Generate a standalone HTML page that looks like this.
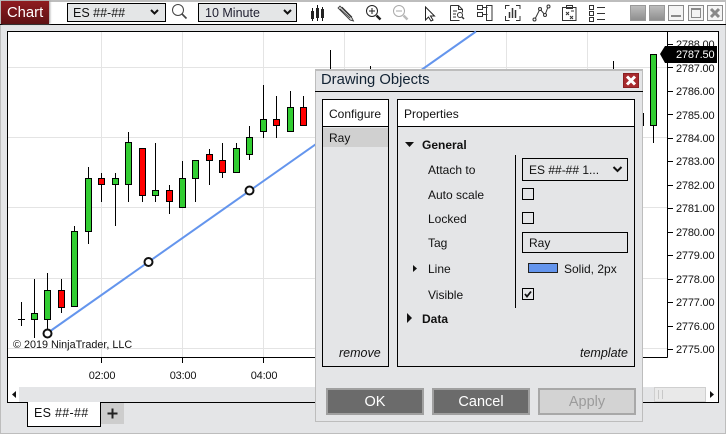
<!DOCTYPE html>
<html><head><meta charset="utf-8"><style>
html,body{margin:0;padding:0}
body{width:726px;height:434px;position:relative;overflow:hidden;background:#e4e5e7;font-family:"Liberation Sans",sans-serif;color:#111}
div{position:absolute;box-sizing:border-box}
.t{white-space:nowrap;line-height:16px;height:16px;font-size:12px}
.ax{font-size:11px;letter-spacing:-.2px;color:#111;margin-top:1px}
.sel{border:1px solid #000;background:#e4e6e7}
.btn{background:#6b6b6b;border:2px solid #a0a0a0;color:#fff;text-align:center;font-size:14.5px;line-height:25px}
.cb{width:12px;height:12px;border:1px solid #000;background:#e4e5e7;left:522px}
</style></head><body>
<div style="left:0;top:0;width:726px;height:434px;border:1px solid #bdbdbd;border-top:2px solid #bdbdbd"></div>
<div style="left:1px;top:2px;width:724px;height:22px;background:#fff"></div>
<div style="left:0;top:24px;width:726px;height:1px;background:#000"></div>
<div style="left:1px;top:1px;width:48px;height:23px;background:linear-gradient(#8f1c20,#5e1114);box-shadow:1px 0 2px #999"></div>
<div class="t" style="left:7px;top:4px;color:#fff;font-size:14.8px;line-height:18px;height:18px">Chart</div>
<div class="sel" style="left:67px;top:3px;width:99px;height:19px"></div>
<div class="t" style="left:73px;top:5px;font-size:12.5px">ES ##-##</div>
<div class="sel" style="left:198px;top:3px;width:99px;height:19px"></div>
<div class="t" style="left:205px;top:5px;font-size:12.5px;color:#223">10 Minute</div>

<svg style="position:absolute;left:0;top:0" width="726" height="25" viewBox="0 0 726 25" fill="none" stroke="#111">
<path d="M151 10l3.500 3.500 3.500-3.500M284 10l3.500 3.500 3.500-3.500" stroke-width="2"/>
<circle cx="178" cy="10" r="5.500" stroke="#444"/><path d="M182 14l4.500 4.500" stroke="#444" stroke-width="1.600"/>
<g stroke-width="1"><path d="M312.500 8v13M317.500 5v16M322.500 7v14"/></g>
<g fill="#222" stroke="none"><rect x="311" y="11" width="3" height="8"/><rect x="316" y="8" width="3" height="10"/><rect x="321" y="9" width="3" height="9"/></g>
<path d="M340 6l12 12 1.500 3-3.500-1-12-12zM340 9l10 9M342 7l10 10" stroke="#333" fill="#ccc" stroke-width=".8"/>
<circle cx="372" cy="11" r="5.500" stroke="#222"/><path d="M369 11h6M372 8v6" stroke="#222"/><path d="M376.500 15.500l4 4" stroke="#222" stroke-width="2.500"/>
<circle cx="399" cy="11" r="5.500" stroke="#aaa"/><path d="M396 11h6" stroke="#aaa"/><path d="M403.500 15.500l4 4" stroke="#bbb" stroke-width="2.500"/>
<path d="M425.500 7v13l3-3 2.500 4 2-1-2.500-4h4z" stroke="#222" fill="#fff"/>
<path d="M450.500 5.500h8l4 4v3M450.500 5.500v15h9M458.500 5.500v4h4M453 11h4M453 14h3M453 17h3" stroke="#333"/><circle cx="460" cy="15" r="2.500" stroke="#333"/><path d="M462 17l2 2" stroke="#333" stroke-width="1.500"/>
<path d="M477.500 5.500h5v4h-5zM477.500 12.500h5v4h-5zM482.500 7.500h5M482.500 14.500h5M486.500 5.500h5.500v15h-5.500z" stroke="#333"/>
<path d="M505.500 9V5.500h4M516 5.500h4V9M505.500 16v4.500h4M516 20.500h4V16" stroke="#333"/>
<path d="M509.500 12v6M512.500 8v10M515.500 10v8" stroke="#333" stroke-width="1.500"/>
<path d="M535 19l5-10 5 6 3-8" stroke="#333"/><g fill="#fff" stroke="#333"><circle cx="534.500" cy="19.500" r="1.500"/><circle cx="540" cy="9" r="1.500"/><circle cx="545" cy="15" r="1.500"/><circle cx="548.500" cy="6.500" r="1.500"/></g>
<path d="M562.500 7.500h13.500v13h-13.500zM566.500 5.500h6v3h-6zM566 12l3 3M569 12l-3 3M570 16l3 3M573 16l-3 3M571 11h3" stroke="#333"/>
<path d="M589.500 5.500h4v4h-4zM589.500 11.500h4v4h-4zM589.500 17.500h4v4h-4zM597 7.500h8M597 13.500h8M597 19.500h8" stroke="#333"/>
</svg>
<div style="left:630px;top:5px;width:16px;height:16px;background:linear-gradient(#bdbdbd,#8f8f8f);border:1px solid #999"></div>
<div style="left:649px;top:5px;width:16px;height:16px;background:linear-gradient(#bdbdbd,#8f8f8f);border:1px solid #999"></div>
<div style="left:668px;top:5px;width:16px;height:16px;border:1px solid #8a8a8a;background:#f4f4f4"><div style="left:2px;top:9px;width:10px;height:2px;background:#8a8a8a"></div></div>
<div style="left:688px;top:5px;width:16px;height:16px;border:1px solid #8a8a8a;background:#f4f4f4"><div style="left:2px;top:2px;width:10px;height:10px;border:1px solid #8a8a8a;border-top:2px solid #8a8a8a"></div></div>
<div style="left:707px;top:5px;width:16px;height:16px;border:1px solid #8a8a8a;background:#f4f4f4"><svg style="position:absolute;left:0;top:0" width="14" height="14"><path d="M3 3l8 8M11 3l-8 8" stroke="#888" stroke-width="3"/></svg></div>

<div style="left:7px;top:31px;width:712px;height:372px;border:1px solid #000;background:#fff"></div>
<svg style="position:absolute;left:0;top:0" width="726" height="434" viewBox="0 0 726 434" fill="none">
<g stroke="#e4e4e4" shape-rendering="crispEdges">
<path d="M101.500 32V357M182.500 32V357M263.500 32V357M344.500 32V357M425.500 32V357M506.500 32V357M587.500 32V357"/>
<path d="M8 67.500H667M8 137.500H667M8 207.500H667M8 278.500H667M8 348.500H667"/>
</g>
<path d="M47.500 333L476 31.500" stroke="#6495ed" stroke-width="2"/>
<g stroke="#000" shape-rendering="crispEdges">
<path d="M21.500 302V326M18 319.500H25M34.500 279V338M47.500 273V333M61.500 279V313M74.500 226V232M88.500 167V244M101.500 173V202M115.500 173V226M128.500 132V202M142.500 148V202M155.500 143V202M169.500 185V214M182.500 161V178M195.500 160V202M209.500 149V185M222.500 143V178M236.500 143V149M249.500 126V160M263.500 85V138M276.500 96V138M290.500 91V108M303.500 96V108M330.500 50V70M370.500 66V70M613.500 61V70M643.500 113V126M653.500 125V143"/>
</g>
<g stroke="#000" fill="#32cd32" shape-rendering="crispEdges">
<rect x="31.500" y="313.500" width="6" height="6"/>
<rect x="44.500" y="290.500" width="6" height="29"/>
<rect x="71.500" y="231.500" width="6" height="75"/>
<rect x="85.500" y="178.500" width="6" height="53"/>
<rect x="112.500" y="178.500" width="6" height="6"/>
<rect x="125.500" y="142.500" width="6" height="42"/>
<rect x="152.500" y="190.500" width="6" height="5"/>
<rect x="179.500" y="178.500" width="6" height="29"/>
<rect x="192.500" y="160.500" width="6" height="18"/>
<rect x="233.500" y="148.500" width="6" height="24"/>
<rect x="246.500" y="137.500" width="6" height="17"/>
<rect x="260.500" y="119.500" width="6" height="12"/>
<rect x="287.500" y="107.500" width="6" height="24"/>
<rect x="650.500" y="54.500" width="6" height="71"/>
</g>
<g stroke="#000" fill="#f00" shape-rendering="crispEdges">
<rect x="58.500" y="290.500" width="6" height="17"/>
<rect x="98.500" y="178.500" width="6" height="6"/>
<rect x="139.500" y="148.500" width="6" height="47"/>
<rect x="166.500" y="190.500" width="6" height="11"/>
<rect x="206.500" y="154.500" width="6" height="6"/>
<rect x="219.500" y="160.500" width="6" height="12"/>
<rect x="273.500" y="119.500" width="6" height="6"/>
<rect x="300.500" y="107.500" width="6" height="18"/>
</g>
<g stroke="#111" stroke-width="2" fill="#fff"><circle cx="47.500" cy="333.500" r="4"/><circle cx="148.500" cy="262" r="4"/><circle cx="249.500" cy="190.500" r="4"/></g>
<g stroke="#000" shape-rendering="crispEdges">
<path d="M667.500 32V357.500M8 357.500H667.500"/>
<path d="M668 44.500h5M668 67.500h5M668 91.500h5M668 114.500h5M668 138.500h5M668 161.500h5M668 185.500h5M668 208.500h5M668 232.500h5M668 255.500h5M668 279.500h5M668 302.500h5M668 326.500h5M668 349.500h5"/>
<path d="M101.500 358v5M182.500 358v5M263.500 358v5M344.500 358v5"/>
</g>
</svg>
<div class="t ax" style="left:676px;top:36px">2788.00</div>
<div class="t ax" style="left:676px;top:60px">2787.00</div>
<div class="t ax" style="left:676px;top:83px">2786.00</div>
<div class="t ax" style="left:676px;top:107px">2785.00</div>
<div class="t ax" style="left:676px;top:130px">2784.00</div>
<div class="t ax" style="left:676px;top:153px">2783.00</div>
<div class="t ax" style="left:676px;top:177px">2782.00</div>
<div class="t ax" style="left:676px;top:200px">2781.00</div>
<div class="t ax" style="left:676px;top:224px">2780.00</div>
<div class="t ax" style="left:676px;top:247px">2779.00</div>
<div class="t ax" style="left:676px;top:271px">2778.00</div>
<div class="t ax" style="left:676px;top:294px">2777.00</div>
<div class="t ax" style="left:676px;top:318px">2776.00</div>
<div class="t ax" style="left:676px;top:341px">2775.00</div>
<svg style="position:absolute;left:0;top:0" width="726" height="70"><path d="M660 54l5-8h52v17h-52z" fill="#000"/></svg>
<div class="t ax" style="left:676px;top:46px;color:#fff">2787.50</div>
<div class="t ax" style="left:13px;top:336px;font-size:10.800px;letter-spacing:0">© 2019 NinjaTrader, LLC</div>
<div class="t ax" style="left:81.500px;top:367px;width:41px;text-align:center">02:00</div>
<div class="t ax" style="left:162.500px;top:367px;width:41px;text-align:center">03:00</div>
<div class="t ax" style="left:243.500px;top:367px;width:41px;text-align:center">04:00</div>

<div style="left:8px;top:387px;width:710px;height:15px;background:#e4e5e7"></div>
<div style="left:8px;top:387px;width:11px;height:15px;background:#fff"></div>
<svg style="position:absolute;left:0;top:380px" width="30" height="30"><path d="M16 11v7l-4-3.500z" fill="#111"/></svg>
<div style="left:706px;top:387px;width:12px;height:15px;background:#fff"></div>
<svg style="position:absolute;left:706px;top:387px" width="12" height="15"><path d="M4 4v7l4-3.500z" fill="#111"/></svg>
<div style="left:654px;top:387px;width:52px;height:15px;background:#e9e9e9;border:1px solid #cfcfcf"></div>
<div style="left:658px;top:390px;width:5px;height:9px;border-left:1px solid #c8c8c8;border-right:1px solid #c8c8c8"></div>

<div style="left:27px;top:402px;width:74px;height:25px;background:#fff;border:1px solid #000;border-top:none"></div>
<div class="t" style="left:34px;top:405px;font-size:12.500px;letter-spacing:.3px">ES ##-##</div>
<div style="left:101px;top:403px;width:23px;height:21px;background:#cdcdcd"></div>
<svg style="position:absolute;left:101px;top:403px" width="23" height="21"><path d="M11.500 5.500v10M6.500 10.500h10" stroke="#222" stroke-width="2"/></svg>

<div style="left:315px;top:69px;width:328px;height:353px;background:#e4e5e7;border:1px solid #bdbdbd;border-top:2px solid #bdbdbd"></div>
<div class="t" style="left:321px;top:72px;font-size:14.800px;color:#123;line-height:17px;height:17px">Drawing Objects</div>
<div style="left:623px;top:73px;width:16px;height:15px;background:#a82a2e;border:1px solid #8a1f22"></div>
<svg style="position:absolute;left:623px;top:73px" width="16" height="15"><path d="M4 3.500l8 8M12 3.500l-8 8" stroke="#fff" stroke-width="3"/></svg>
<div style="left:315px;top:91px;width:328px;height:1px;background:#000"></div>

<div style="left:322px;top:99px;width:67px;height:268px;border:1px solid #000"></div>
<div style="left:323px;top:100px;width:65px;height:27px;background:#fff;border-bottom:1px solid #000"></div>
<div class="t" style="left:329px;top:106px">Configure</div>
<div style="left:323px;top:128px;width:65px;height:19px;background:#d0d0d0"></div>
<div class="t" style="left:329px;top:130px">Ray</div>
<div class="t" style="left:339px;top:345px;font-style:italic;font-size:12.500px">remove</div>

<div style="left:397px;top:99px;width:238px;height:268px;border:1px solid #000"></div>
<div style="left:398px;top:100px;width:236px;height:27px;background:#fff;border-bottom:1px solid #000"></div>
<div class="t" style="left:404px;top:106px">Properties</div>
<svg style="position:absolute;left:397px;top:130px" width="30" height="200"><path d="M8 12h9l-4.500 5z" fill="#111"/><path d="M16 135v7l4-3.500z" fill="#111"/><path d="M10 183v10l5-5z" fill="#111"/></svg>
<div class="t" style="left:422px;top:137px;font-weight:bold">General</div>
<div class="t" style="left:428px;top:162px">Attach to</div>
<div class="t" style="left:428px;top:187px">Auto scale</div>
<div class="t" style="left:428px;top:211px">Locked</div>
<div class="t" style="left:428px;top:235px">Tag</div>
<div class="t" style="left:428px;top:261px">Line</div>
<div class="t" style="left:428px;top:287px">Visible</div>
<div class="t" style="left:422px;top:311px;font-weight:bold">Data</div>
<div class="t" style="left:580px;top:345px;font-style:italic;font-size:12.500px">template</div>
<div style="left:515px;top:155px;width:1px;height:153px;background:#000"></div>
<div class="sel" style="left:522px;top:158px;width:106px;height:23px;background:#e4e5e7"></div>
<div class="t" style="left:529px;top:162px">ES ##-## 1...</div>
<svg style="position:absolute;left:612px;top:165px" width="12" height="9"><path d="M1.500 2l4 4 4-4" stroke="#111" stroke-width="2" fill="none"/></svg>
<div class="cb" style="top:188px"></div>
<div class="cb" style="top:212px"></div>
<div style="left:522px;top:232px;width:106px;height:21px;border:1px solid #000"></div>
<div class="t" style="left:529px;top:235px">Ray</div>
<div style="left:528px;top:263px;width:30px;height:10px;background:#6495ed;border:1px solid #222"></div>
<div class="t" style="left:564px;top:261px">Solid, 2px</div>
<div class="cb" style="top:288px"></div>
<svg style="position:absolute;left:522px;top:288px" width="12" height="12"><path d="M3 6l2 2.500 4-5" stroke="#111" stroke-width="1.800" fill="none"/></svg>

<div class="btn" style="left:326px;top:388px;width:98px;height:27px">OK</div>
<div class="btn" style="left:432px;top:388px;width:98px;height:27px">Cancel</div>
<div class="btn" style="left:538px;top:388px;width:98px;height:27px;background:#d3d3d3;border-color:#a8a8a8;color:#9b9b9b">Apply</div>
</body></html>
